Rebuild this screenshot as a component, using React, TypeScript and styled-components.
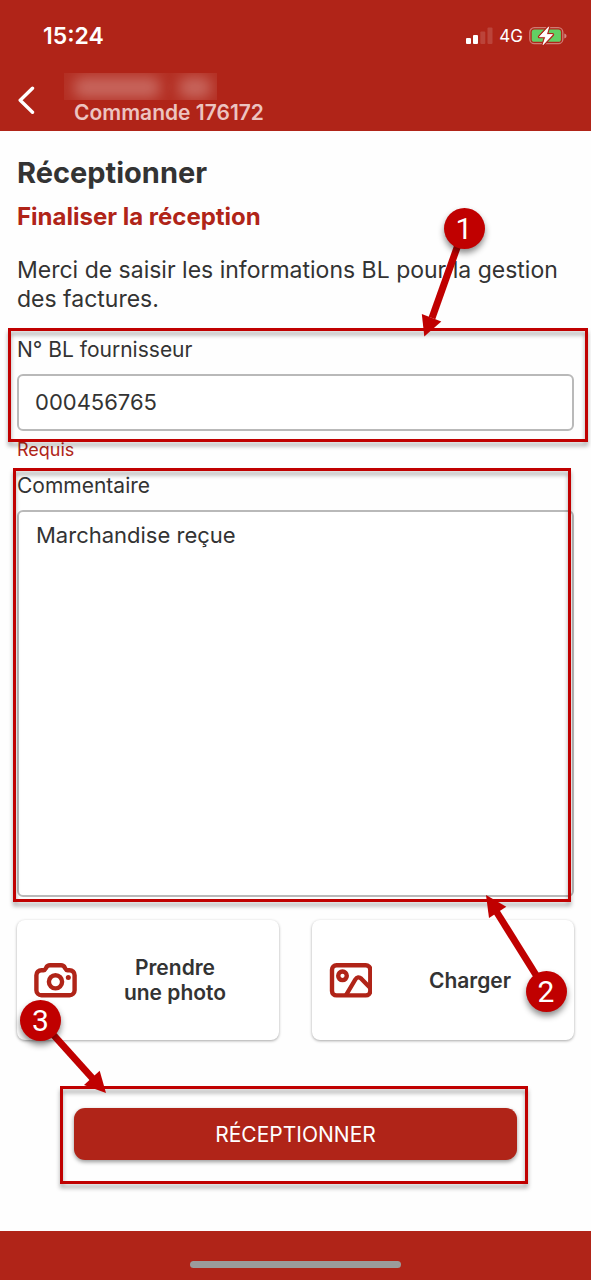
import React from "react";
import styled, { createGlobalStyle } from "styled-components";

const brand = "#b02418";
const marker = "#c00000";
const ink = "#333333";

const GlobalStyle = createGlobalStyle`
  *, *::before, *::after { box-sizing: border-box; }
  body {
    margin: 0;
    background: #fefefe;
    color: ${ink};
    font-family: Inter, "Liberation Sans", sans-serif;
  }
  h1, h2, p { margin: 0; }
  button, input, textarea { font: inherit; color: inherit; }
`;

const Page = styled.div`
  display: flex;
  flex-direction: column;
  min-height: 100vh;
  overflow-x: hidden;
`;

const TopArea = styled.header`
  background: ${brand};
  color: #ffffff;
`;

const StatusBar = styled.div`
  display: flex;
  align-items: center;
  justify-content: space-between;
  height: 72px;
  padding: 0 24px 0 43px;
`;

const Clock = styled.time`
  font-size: 23px;
  font-weight: 600;
  line-height: 26px;
`;

const StatusIcons = styled.div`
  display: flex;
  align-items: center;
  gap: 6px;
  font-size: 17px;
  line-height: 20px;
`;

const AppBar = styled.div`
  display: flex;
  align-items: flex-start;
  height: 59px;
  padding: 1px 18px 0;
`;

const BackButton = styled.button`
  display: flex;
  align-items: center;
  width: 46px;
  height: 54px;
  padding: 0;
  border: 0;
  background: none;
  cursor: pointer;
`;

const HiddenName = styled.div`
  position: relative;
  width: 153px;
  height: 27px;
  overflow: hidden;
  background: rgba(255, 255, 255, 0.05);

  &::before, &::after {
    content: "";
    position: absolute;
    top: 4px;
    height: 21px;
    border-radius: 8px;
    background: rgba(255, 255, 255, 0.27);
    filter: blur(7px);
  }
  &::before { left: 10px; width: 86px; }
  &::after { right: 6px; width: 32px; }
`;

const OrderNumber = styled.div`
  padding-left: 10px;
  color: #ecc3c0;
  font-size: 21px;
  font-weight: 600;
  line-height: 26px;
  white-space: nowrap;
`;

const Content = styled.main`
  display: flex;
  flex: 1;
  flex-direction: column;
  padding: 24px 17px 71px;
`;

const Title = styled.h1`
  font-size: 29px;
  font-weight: 700;
  line-height: 36px;
`;

const Subtitle = styled.h2`
  margin-top: 12px;
  color: ${brand};
  font-size: 24px;
  font-weight: 700;
  line-height: 28px;
`;

const Intro = styled.p`
  margin-top: 25px;
  font-size: 23px;
  line-height: 29px;
`;

const Field = styled.div<{ $gap: number }>`
  position: relative;
  display: flex;
  flex-direction: column;
  gap: 11px;
  margin-top: ${(p) => p.$gap}px;
`;

const Label = styled.label`
  font-size: 21px;
  line-height: 26px;
`;

const TextInput = styled.input`
  width: 100%;
  height: 57px;
  padding: 0 16px 2px;
  border: 2px solid #b9b9b9;
  border-radius: 6px;
  background: #ffffff;
  font-size: 22px;
  outline: none;
`;

const TextBox = styled.textarea`
  display: block;
  width: 100%;
  height: 387px;
  padding: 9px 17px;
  border: 2px solid #b9b9b9;
  border-radius: 6px;
  background: #ffffff;
  font-size: 22px;
  line-height: 29px;
  resize: none;
  outline: none;
`;

const Hint = styled.p`
  margin-top: 7px;
  color: ${brand};
  font-size: 18px;
  line-height: 24px;
`;

const Cards = styled.div`
  position: relative;
  display: grid;
  grid-template-columns: 1fr 1fr;
  gap: 33px;
  margin-top: 23px;
`;

const Card = styled.button`
  display: flex;
  align-items: center;
  height: 120px;
  padding: 0 6px 0 17px;
  border: 0;
  border-radius: 8px;
  background: #ffffff;
  box-shadow: 0 1px 3px rgba(0, 0, 0, 0.35);
  font-size: 21px;
  font-weight: 600;
  line-height: 25px;
  cursor: pointer;
`;

const CardText = styled.span`
  flex: 1;
  text-align: center;
`;

const SubmitRow = styled.div`
  position: relative;
  margin: 68px 57px 0;
`;

const SubmitButton = styled.button`
  display: block;
  width: 100%;
  height: 52px;
  border: 0;
  border-radius: 11px;
  background: ${brand};
  box-shadow: 0 2px 4px rgba(0, 0, 0, 0.4);
  color: #ffffff;
  font-size: 21px;
  cursor: pointer;
`;

const BottomBar = styled.footer`
  display: flex;
  justify-content: center;
  align-items: flex-end;
  height: 49px;
  padding-bottom: 12px;
  background: ${brand};
`;

const HomeIndicator = styled.div`
  width: 211px;
  height: 7px;
  border-radius: 4px;
  background: #9b9b9b;
`;

const Frame = styled.div<{ $inset: string }>`
  position: absolute;
  z-index: 1;
  inset: ${(p) => p.$inset};
  border: 3px solid ${marker};
  filter: drop-shadow(0 4px 2px rgba(0, 0, 0, 0.35));
  pointer-events: none;
`;

const Pointer = styled.svg<{ $top: number; $left?: number; $right?: number }>`
  position: absolute;
  z-index: 2;
  top: ${(p) => p.$top}px;
  ${(p) => (p.$left !== undefined ? `left: ${p.$left}px;` : "")}
  ${(p) => (p.$right !== undefined ? `right: ${p.$right}px;` : "")}
  overflow: visible;
  pointer-events: none;

  circle { filter: drop-shadow(0 4px 3px rgba(0, 0, 0, 0.45)); }
  text {
    fill: #ffffff;
    font-family: Roboto, sans-serif;
    font-size: 30px;
    text-anchor: middle;
  }
`;

const Signal = () => (
  <svg width="27" height="18" viewBox="0 0 27 18" fill="#fff" aria-hidden="true">
    <rect x="0" y="11" width="5" height="6" rx="1" />
    <rect x="7" y="8" width="5" height="9" rx="1" />
    <rect x="14.3" y="4.500" width="5" height="12.500" rx="1" opacity=".15" />
    <rect x="21.500" y="0.500" width="5" height="16.500" rx="1" opacity=".15" />
  </svg>
);

const Battery = () => (
  <svg width="38" height="20" viewBox="0 0 38 20" aria-hidden="true">
    <rect x=".8" y="1.700" width="33" height="16" rx="4.500" fill="none" stroke="#fff" strokeOpacity=".4" strokeWidth="1.300" />
    <path d="M35.300 7.500v5c1.600-.5 2.200-1.400 2.200-2.500S36.900 8 35.300 7.500z" fill="#fff" opacity=".45" />
    <rect x="2.700" y="3.600" width="29.200" height="12.200" rx="2.600" fill="#62d064" />
    <path d="M19.800.8 10.400 10.800h6.200L14 18.800l9.600-10.200h-6.100z" fill="#fff" stroke={brand} strokeWidth="3" strokeLinejoin="round" paintOrder="stroke" />
    <path d="M19.800.8 10.400 10.800h6.200L14 18.800l9.600-10.200h-6.100z" fill="#fff" stroke="#fff" strokeWidth=".6" strokeLinejoin="round" />
  </svg>
);

const CameraIcon = () => (
  <svg width="43" height="35" viewBox="0 0 43 35" fill="none" stroke={brand} strokeWidth="4.400" strokeLinejoin="round" aria-hidden="true">
    <path d="M2.400 12.200a5 5 0 0 1 5-5h2.100c1.700 0 2-1.300 2.600-2.400C13 3 14.200 2.300 16 2.300h11c1.800 0 3 .7 3.900 2.500.6 1.100.9 2.400 2.600 2.400h2.100a5 5 0 0 1 5 5v15a5 5 0 0 1-5 5H7.400a5 5 0 0 1-5-5z" />
    <circle cx="21.500" cy="18.800" r="6.600" />
    <circle cx="34.300" cy="14.500" r="2.500" fill={brand} stroke="none" />
  </svg>
);

const PictureIcon = () => (
  <svg width="43" height="35" viewBox="0 0 43 35" fill="none" stroke={brand} strokeWidth="4.400" aria-hidden="true">
    <rect x="3" y="2.200" width="38.300" height="30.200" rx="4.500" />
    <circle cx="13.500" cy="12.800" r="4.300" />
    <path d="M17.100 32 26.300 16.500c1.600-2.600 3.900-2.800 6-.8l9 9.300" />
  </svg>
);

export default function App() {
  return (
    <Page>
      <GlobalStyle />
      <TopArea>
        <StatusBar>
          <Clock>15:24</Clock>
          <StatusIcons>
            <Signal />
            <span>4G</span>
            <Battery />
          </StatusIcons>
        </StatusBar>
        <AppBar>
          <BackButton type="button" aria-label="Retour">
            <svg width="18" height="28" viewBox="0 0 18 28" fill="none" stroke="#fff" strokeWidth="3.400" strokeLinecap="round" strokeLinejoin="round" aria-hidden="true">
              <path d="M14.500 2.200 2.200 14.300l12.300 11.900" />
            </svg>
          </BackButton>
          <div>
            <HiddenName />
            <OrderNumber>Commande 176172</OrderNumber>
          </div>
        </AppBar>
      </TopArea>

      <Content>
        <Title>Réceptionner</Title>
        <Subtitle>Finaliser la réception</Subtitle>
        <Intro>Merci de saisir les informations BL pour la gestion des factures.</Intro>

        <Field $gap={23}>
          <Label htmlFor="bl">N° BL fournisseur</Label>
          <TextInput id="bl" type="text" defaultValue="000456765" aria-describedby="bl-hint" />
          <Frame $inset="-9px -14px -11px -9px" />
          <Pointer $top={-137} $right={80} width="80" height="150" viewBox="0 0 80 150">
            <path d="M50 28 18 118" stroke={marker} strokeWidth="7" />
            <path d="M10.300 136.500 7.800 114 27.300 121.500z" fill={marker} />
            <circle cx="50.500" cy="28.500" r="20.500" fill={marker} />
            <text x="50" y="39">1</text>
          </Pointer>
        </Field>
        <Hint id="bl-hint">Requis</Hint>

        <Field $gap={11}>
          <Label htmlFor="comment">Commentaire</Label>
          <TextBox id="comment" defaultValue="Marchandise reçue" />
          <Frame $inset="-5px 3px -5px -4px" />
        </Field>

        <Cards>
          <Card type="button">
            <CameraIcon />
            <CardText>
              Prendre
              <br />
              une photo
            </CardText>
          </Card>
          <Card type="button">
            <PictureIcon />
            <CardText>Charger</CardText>
          </Card>
          <Pointer $top={-35} $right={-2} width="100" height="140" viewBox="0 0 100 140">
            <path d="M70 106 20 26" stroke={marker} strokeWidth="7" />
            <path d="M10 10 30.300 21.700 13 33z" fill={marker} />
            <circle cx="70.500" cy="106.500" r="20.500" fill={marker} />
            <text x="70" y="117">2</text>
          </Pointer>
          <Pointer $top={70} $left={-7} width="106" height="116" viewBox="0 0 106 116">
            <path d="M30 30 84 90" stroke={marker} strokeWidth="7" />
            <path d="M96 103 89.700 80.700 74 95z" fill={marker} />
            <circle cx="30.500" cy="30.500" r="20.500" fill={marker} />
            <text x="30.500" y="41">3</text>
          </Pointer>
        </Cards>

        <SubmitRow>
          <SubmitButton type="submit">RÉCEPTIONNER</SubmitButton>
          <Frame $inset="-22px -11px -24px -14px" />
        </SubmitRow>
      </Content>

      <BottomBar>
        <HomeIndicator />
      </BottomBar>
    </Page>
  );
}
